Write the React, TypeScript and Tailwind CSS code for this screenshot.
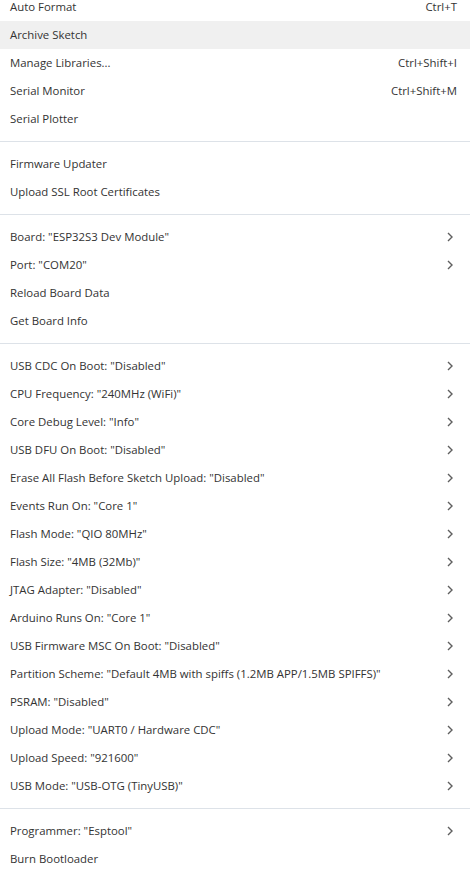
import React from 'react';

type Item = { label: string; shortcut?: string; submenu?: boolean; active?: boolean };

const sections: Item[][] = [
  [
    { label: 'Auto Format', shortcut: 'Ctrl+T' },
    { label: 'Archive Sketch', active: true },
    { label: 'Manage Libraries...', shortcut: 'Ctrl+Shift+I' },
    { label: 'Serial Monitor', shortcut: 'Ctrl+Shift+M' },
    { label: 'Serial Plotter' },
  ],
  [{ label: 'Firmware Updater' }, { label: 'Upload SSL Root Certificates' }],
  [
    { label: 'Board: "ESP32S3 Dev Module"', submenu: true },
    { label: 'Port: "COM20"', submenu: true },
    { label: 'Reload Board Data' },
    { label: 'Get Board Info' },
  ],
  [
    { label: 'USB CDC On Boot: "Disabled"', submenu: true },
    { label: 'CPU Frequency: "240MHz (WiFi)"', submenu: true },
    { label: 'Core Debug Level: "Info"', submenu: true },
    { label: 'USB DFU On Boot: "Disabled"', submenu: true },
    { label: 'Erase All Flash Before Sketch Upload: "Disabled"', submenu: true },
    { label: 'Events Run On: "Core 1"', submenu: true },
    { label: 'Flash Mode: "QIO 80MHz"', submenu: true },
    { label: 'Flash Size: "4MB (32Mb)"', submenu: true },
    { label: 'JTAG Adapter: "Disabled"', submenu: true },
    { label: 'Arduino Runs On: "Core 1"', submenu: true },
    { label: 'USB Firmware MSC On Boot: "Disabled"', submenu: true },
    { label: 'Partition Scheme: "Default 4MB with spiffs (1.2MB APP/1.5MB SPIFFS)"', submenu: true },
    { label: 'PSRAM: "Disabled"', submenu: true },
    { label: 'Upload Mode: "UART0 / Hardware CDC"', submenu: true },
    { label: 'Upload Speed: "921600"', submenu: true },
    { label: 'USB Mode: "USB-OTG (TinyUSB)"', submenu: true },
  ],
  [{ label: 'Programmer: "Esptool"', submenu: true }, { label: 'Burn Bootloader' }],
];

const Chevron = () => (
  <svg width="8" height="10" viewBox="0 0 8 10" className="shrink-0">
    <path d="M2 1 L6 5 L2 9" fill="none" stroke="#5f5f5f" strokeWidth="1.4" />
  </svg>
);

export default function App() {
  return (
    <div className="h-[870px] w-[470px] overflow-hidden bg-white">
      <div className="-mt-[7px] flex flex-col text-[11.4px] text-[#333] [font-family:'Open_Sans',sans-serif]">
        {sections.map((section, si) => (
          <React.Fragment key={si}>
            {si > 0 && (
              <div className="py-2">
                <div className="h-px bg-[#dde2e8]" />
              </div>
            )}
            {section.map((item) => (
              <div
                key={item.label}
                className={`flex h-[28px] items-center justify-between pl-[10px] ${
                  item.submenu ? 'pr-[16px]' : 'pr-[13px]'
                } ${item.active ? 'bg-[#f0f0f0]' : ''}`}
              >
                <span className="whitespace-nowrap">{item.label}</span>
                {item.shortcut && <span className="whitespace-nowrap">{item.shortcut}</span>}
                {item.submenu && <Chevron />}
              </div>
            ))}
          </React.Fragment>
        ))}
      </div>
    </div>
  );
}
